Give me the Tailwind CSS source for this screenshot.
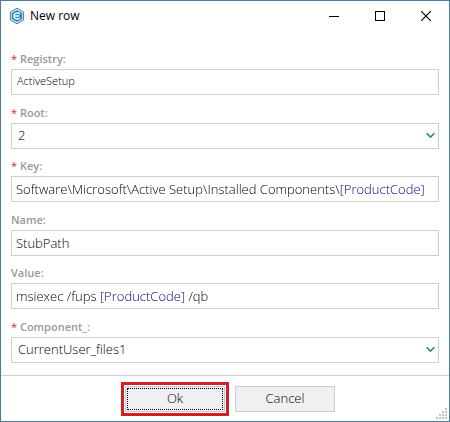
<!DOCTYPE html>
<html lang="en">
<head>
<meta charset="utf-8">
<title>New row</title>
<script src="https://cdn.jsdelivr.net/npm/@tailwindcss/browser@4"></script>
</head>
<body class="font-['Open_Sans','Noto_Sans',sans-serif] text-black">
<main class="flex min-h-screen flex-col border border-[#457c98] bg-white">
  <header class="flex h-[30px] items-center pl-[6px]">
    <svg class="size-5" viewBox="0 0 20 20" aria-hidden="true">
      <path d="M10 2.200 16.600 6v8L10 17.800 3.400 14V6z" fill="#d7e9f1" stroke="#4b7f98" stroke-width="1"/>
      <path d="M10 4 15.200 7v6L10 16l-5.200-3V7z" fill="#2e8fb8"/>
      <path d="M13 7.900C11.200 6.200 7 6.800 7 10s4.200 3.800 6 2.100M7 10h5" fill="none" stroke="#fff" stroke-width="1.400"/>
    </svg>
    <h1 class="flex-1 pl-[3px] text-xs text-black">New row</h1>
    <div class="flex h-full">
      <button type="button" aria-label="Minimize" class="flex w-[46px] items-center justify-center"><svg class="size-[10px]" viewBox="0 0 10 10" shape-rendering="crispEdges"><path d="M0 5.500h10" stroke="#000"/></svg></button>
      <button type="button" aria-label="Maximize" class="flex w-[46px] items-center justify-center"><svg class="size-[10px]" viewBox="0 0 10 10" shape-rendering="crispEdges"><path d="M.5.5h9v9h-9z" fill="none" stroke="#000"/></svg></button>
      <button type="button" aria-label="Close" class="flex w-[46px] items-center justify-center"><svg class="size-[10px]" viewBox="0 0 10 10"><path d="M0 0 10 10M10 0 0 10" stroke="#000" stroke-width="1.100"/></svg></button>
    </div>
  </header>
  <form class="flex flex-1 flex-col">
    <div class="flex flex-1 flex-col justify-between px-[10px] pt-5 pb-3">
      <div>
        <label for="registry" class="block h-[18px] text-[11px] leading-4 font-semibold text-[#999]"><span class="font-normal text-[#d9262c]">*</span> Registry:</label>
        <input id="registry" value="ActiveSetup" class="block h-[26px] w-full border border-[#cfcfcf] px-[5px] pb-[3px] text-[11px] font-light">
      </div>
      <div>
        <label for="root" class="block h-[18px] text-[11px] leading-4 font-semibold text-[#999]"><span class="font-normal text-[#d9262c]">*</span> Root:</label>
        <div class="relative">
          <select id="root" class="block h-[26px] w-full appearance-none border border-[#cfcfcf] px-[6px] text-[13px] font-light"><option>2</option></select>
          <svg class="pointer-events-none absolute top-[9px] right-1 h-[7px] w-[9px]" viewBox="0 0 9 7" fill="none" stroke="#2c8a85" stroke-width="1.600"><path d="M.6 1.200 4.500 5.100 8.400 1.200"/></svg>
        </div>
      </div>
      <div>
        <label for="key" class="block h-[18px] text-[11px] leading-4 font-semibold text-[#999]"><span class="font-normal text-[#d9262c]">*</span> Key:</label>
        <div class="border border-[#cfcfcf] px-1"><input id="key" value="Software\Microsoft\Active Setup\Installed Components\[ProductCode]" class="block h-6 w-full bg-[linear-gradient(to_right,#000_325px,#10008c_325px)] bg-clip-text text-[13px] font-light [-webkit-text-fill-color:transparent]"></div>
      </div>
      <div>
        <label for="name" class="block h-[18px] text-[11px] leading-4 font-semibold text-[#999]">Name:</label>
        <input id="name" value="StubPath" class="block h-[26px] w-full border border-[#cfcfcf] px-1 text-[13px] font-light">
      </div>
      <div>
        <label for="value" class="block h-[18px] text-[11px] leading-4 font-semibold text-[#999]">Value:</label>
        <div class="border border-[#cfcfcf] px-1"><input id="value" value="msiexec /fups [ProductCode] /qb" class="block h-6 w-full bg-[linear-gradient(to_right,#000_84px,#10008c_84px,#10008c_169px,#000_169px)] bg-clip-text text-[13px] font-light [-webkit-text-fill-color:transparent]"></div>
      </div>
      <div>
        <label for="component" class="block h-[18px] text-[11px] leading-4 font-semibold text-[#999]"><span class="font-normal text-[#d9262c]">*</span> Component_:</label>
        <div class="relative">
          <select id="component" class="block h-[26px] w-full appearance-none border border-[#cfcfcf] px-[6px] text-[13px] font-light"><option>CurrentUser_files1</option></select>
          <svg class="pointer-events-none absolute top-[9px] right-1 h-[7px] w-[9px]" viewBox="0 0 9 7" fill="none" stroke="#2c8a85" stroke-width="1.600"><path d="M.6 1.200 4.500 5.100 8.400 1.200"/></svg>
        </div>
      </div>
    </div>
    <footer class="relative flex justify-center gap-[10px] border-t border-[#cfcfcf] pt-[10px] pb-[9px] pl-[10px] text-[13px] font-light">
      <button type="submit" class="h-[26px] w-[100px] border border-[#cccccf] bg-[#f0f0f2] p-px outline-3 outline-offset-1 outline-[#d0202a]"><span class="flex h-full items-center justify-center border border-dotted border-black">Ok</span></button>
      <button type="button" class="h-[26px] w-[100px] border border-[#cccccf] bg-[#f0f0f2]">Cancel</button>
      <svg class="absolute right-0.5 bottom-0.5 size-[11px]" viewBox="0 0 11 11" fill="#c4c4c4" shape-rendering="crispEdges" aria-hidden="true"><path d="M9 0h2v2H9zM9 3h2v2H9zM6 3h2v2H6zM9 6h2v2H9zM6 6h2v2H6zM3 6h2v2H3zM9 9h2v2H9zM6 9h2v2H6zM3 9h2v2H3zM0 9h2v2H0z"/></svg>
    </footer>
  </form>
</main>
</body>
</html>
